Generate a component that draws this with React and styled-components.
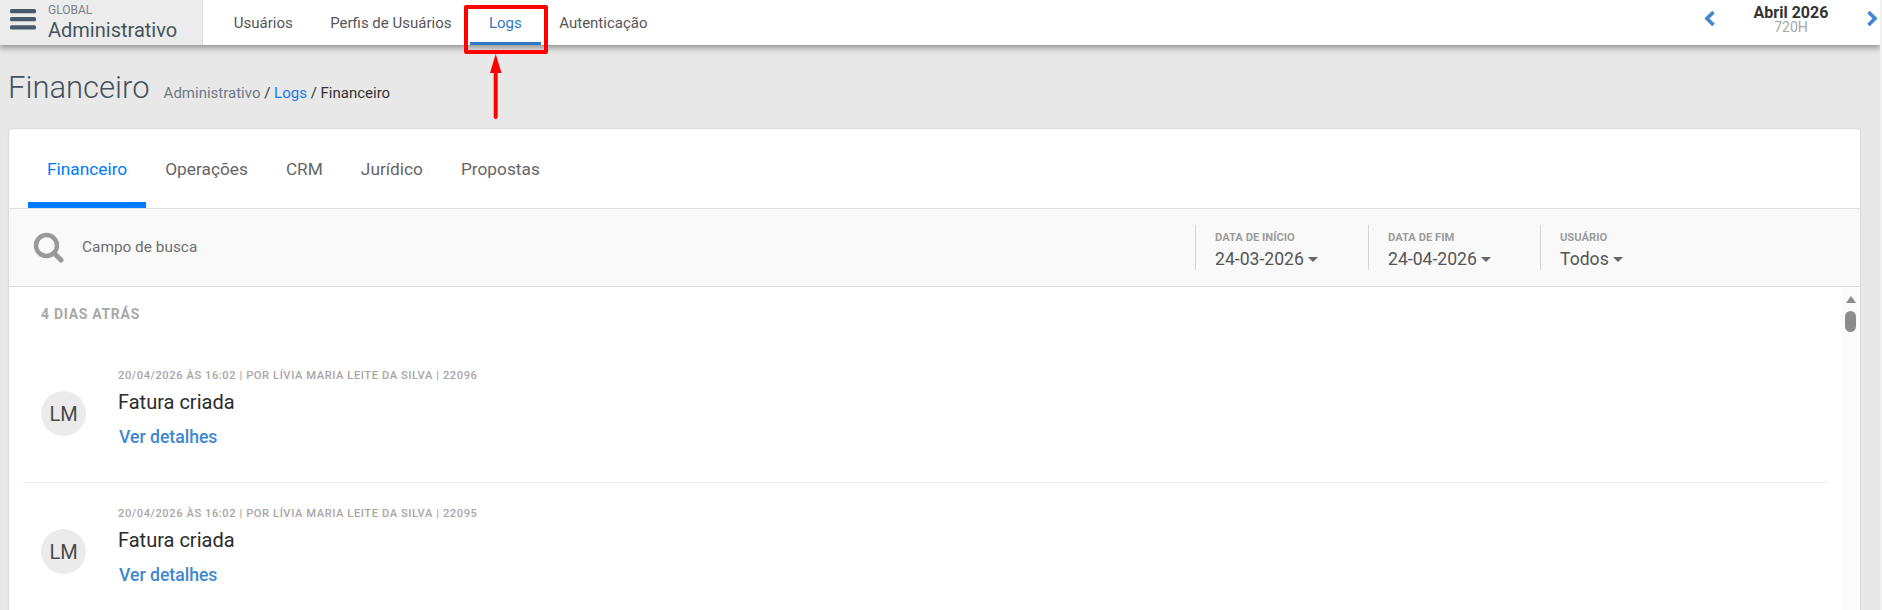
import React from 'react';
import styled, { createGlobalStyle } from 'styled-components';

const GlobalStyle = createGlobalStyle`
	html, body {
		margin: 0;
		padding: 0;
		height: 610px;
		overflow: hidden;
		background: #f1f1f1;
		font-family: Roboto, "Liberation Sans", sans-serif;
	}
	* {
		box-sizing: border-box;
	}
`;

const Page = styled.div`
	position: relative;
	width: 1880px;
	height: 610px;
	overflow: hidden;
	background: #e8e8e8;
`;

const Header = styled.header`
	position: relative;
	z-index: 2;
	display: flex;
	height: 45px;
	background: #fff;
	box-shadow: 0 1px 7px 1px rgba(0, 0, 0, 0.45);
`;

const Brand = styled.div`
	display: flex;
	width: 203px;
	padding-left: 9px;
	background: #ececec;
	border-right: 1px solid #e0e0e0;
`;

const MenuIcon = styled.svg`
	width: 28px;
	height: 21px;
	margin-top: 9px;
	margin-right: 11px;
	flex: none;
`;

const BrandText = styled.div`
	display: flex;
	flex-direction: column;
`;

const BrandSmall = styled.span`
	margin-top: 3px;
	font-size: 12px;
	line-height: 14px;
	color: #7a8288;
`;

const BrandBig = styled.span`
	margin-top: 1px;
	font-size: 20px;
	line-height: 24px;
	color: #46535e;
`;

const Nav = styled.nav`
	display: flex;
	padding-left: 12px;
`;

const NavItem = styled.a`
	display: flex;
	align-items: center;
	height: 45px;
	padding: 4px 18.75px 0;
	font-size: 15px;
	color: ${({ $active }) => ($active ? '#3178c6' : '#555')};
	border-bottom: 3px solid ${({ $active }) => ($active ? '#3178c6' : 'transparent')};
`;

const Period = styled.div`
	display: flex;
	align-items: center;
	height: 45px;
	margin-left: auto;
	margin-right: 2px;
	padding-bottom: 9px;
`;

const PeriodText = styled.div`
	display: flex;
	flex-direction: column;
	align-items: center;
	width: 150px;
	margin-top: 3px;
`;

const PeriodMonth = styled.span`
	font-size: 16px;
	font-weight: 700;
	line-height: 16px;
	color: #333;
`;

const PeriodHours = styled.span`
	font-size: 14px;
	line-height: 13px;
	color: #a8a8a8;
`;

const Chevron = styled.svg`
	width: 12px;
	height: 17px;
	flex: none;
`;

const TitleRow = styled.div`
	display: flex;
	align-items: baseline;
	height: 84px;
	padding: 23px 0 0 8px;
`;

const Title = styled.h1`
	margin: 0 14px 0 0;
	font-size: 31px;
	font-weight: 300;
	line-height: 40px;
	color: #46535e;
`;

const Crumbs = styled.div`
	font-size: 15px;
	color: #333;
`;

const CrumbMuted = styled.span`
	color: #6c7b86;
`;

const CrumbLink = styled.a`
	color: #1a7bea;
`;

const Card = styled.section`
	margin: 0 20px 0 9px;
	height: 600px;
	background: #fff;
	border-radius: 3px;
	box-shadow: 0 0 2px rgba(0, 0, 0, 0.2);
`;

const Tabs = styled.div`
	display: flex;
	height: 80px;
	padding-left: 19px;
	border-bottom: 1px solid #e0e0e0;
`;

const Tab = styled.a`
	display: flex;
	align-items: center;
	height: 79px;
	padding: 6px 19px 0;
	font-size: 17.3px;
	color: ${({ $active }) => ($active ? '#007bff' : '#666')};
	border-bottom: 6px solid ${({ $active }) => ($active ? '#007bff' : 'transparent')};
`;

const FilterBar = styled.div`
	display: flex;
	align-items: center;
	height: 78px;
	padding-left: 24px;
	background: #f9f9f9;
	border-bottom: 1px solid #dedede;
`;

const SearchIcon = styled.svg`
	width: 31px;
	height: 31px;
	flex: none;
`;

const SearchLabel = styled.span`
	margin: 0 0 2px 18px;
	font-size: 15.4px;
	color: #6d6d6d;
`;

const Filters = styled.div`
	display: flex;
	margin-left: auto;
	margin-right: 180px;
`;

const Filter = styled.div`
	display: flex;
	flex-direction: column;
	width: ${({ $w }) => $w}px;
	height: 45px;
	padding-left: 19px;
	border-left: 1px solid #d4d4d4;
`;

const FilterLabel = styled.span`
	margin-top: 6px;
	font-size: 11.2px;
	font-weight: 700;
	line-height: 14px;
	color: #9d9d9d;
`;

const FilterValue = styled.span`
	display: flex;
	align-items: center;
	margin-top: 4px;
	font-size: 17.6px;
	line-height: 20px;
	color: #555;
`;

const Caret = styled.i`
	width: 0;
	height: 0;
	margin-left: 4px;
	border-left: 5px solid transparent;
	border-right: 5px solid transparent;
	border-top: 5px solid #666;
`;

const ListArea = styled.div`
	display: flex;
	height: 400px;
`;

const List = styled.div`
	flex: 1;
	padding: 0 14px;
`;

const DayHeading = styled.div`
	height: 49px;
	padding: 19px 0 0 18px;
	font-size: 14px;
	font-weight: 700;
	line-height: 16px;
	letter-spacing: 0.7px;
	color: #a9a9a9;
`;

const LogRow = styled.article`
	display: flex;
	align-items: flex-start;
	height: 138px;
	padding: ${({ $first }) => ($first ? '33px' : '24px')} 0 0 18px;
	border-bottom: 1px solid #ececec;
	&:first-of-type {
		height: 147px;
	}
`;

const Avatar = styled.div`
	display: flex;
	align-items: center;
	justify-content: center;
	width: 45px;
	height: 45px;
	margin: 22px 32px 0 0;
	flex: none;
	border-radius: 50%;
	background: #ebebeb;
	font-size: 20px;
	color: #4a4a4a;
`;

const LogBody = styled.div`
	display: flex;
	flex-direction: column;
	align-items: flex-start;
`;

const LogMeta = styled.span`
	font-size: 11.2px;
	font-weight: 500;
	line-height: 14px;
	letter-spacing: 0.55px;
	color: #aaa5a5;
`;

const LogTitle = styled.span`
	margin-top: 6px;
	font-size: 20px;
	line-height: 26px;
	color: #2b2b2b;
`;

const LogLink = styled.a`
	margin: 11px 0 0 1px;
	font-size: 17.6px;
	font-weight: 500;
	line-height: 22px;
	color: #3f87cf;
`;

const ScrollTrack = styled.div`
	display: flex;
	flex-direction: column;
	align-items: center;
	width: 19px;
	margin-left: -1px;
	padding-top: 9px;
	background: #fbfbfb;
`;

const ScrollArrow = styled.i`
	width: 0;
	height: 0;
	border-left: 5px solid transparent;
	border-right: 5px solid transparent;
	border-bottom: 7px solid #8c8c8c;
`;

const ScrollThumb = styled.i`
	width: 11px;
	height: 21px;
	margin-top: 8px;
	border-radius: 6px;
	background: #8c8c8c;
`;

const Highlight = styled.div`
	position: absolute;
	z-index: 3;
	left: 464px;
	top: 5px;
	width: 84px;
	height: 49px;
	border: 4px solid #f00;
	border-radius: 2px;
`;

const Arrow = styled.svg`
	position: absolute;
	z-index: 3;
	left: 490px;
	top: 54px;
	width: 12px;
	height: 66px;
`;

const tabs = ['Financeiro', 'Operações', 'CRM', 'Jurídico', 'Propostas'];
const navItems = ['Usuários', 'Perfis de Usuários', 'Logs', 'Autenticação'];
const filters = [
	{ label: 'DATA DE INÍCIO', value: '24-03-2026', w: 173 },
	{ label: 'DATA DE FIM', value: '24-04-2026', w: 172 },
	{ label: 'USUÁRIO', value: 'Todos', w: 140 },
];
const logs = ['22096', '22095'];

const App = () => (
	<Page>
		<GlobalStyle />
		<Header>
			<Brand>
				<MenuIcon viewBox="0 0 28 21">
					<rect x="1" y="0" width="26" height="4.3" rx="1.5" fill="#47596a" />
					<rect x="1" y="8" width="26" height="4.3" rx="1.5" fill="#47596a" />
					<rect x="1" y="16.3" width="26" height="4.3" rx="1.5" fill="#47596a" />
				</MenuIcon>
				<BrandText>
					<BrandSmall>GLOBAL</BrandSmall>
					<BrandBig>Administrativo</BrandBig>
				</BrandText>
			</Brand>
			<Nav>
				{navItems.map((item) => (
					<NavItem key={item} $active={item === 'Logs'}>
						{item}
					</NavItem>
				))}
			</Nav>
			<Period>
				<Chevron viewBox="0 0 12 17">
					<path d="M9.5 2 3 8.5 9.5 15" fill="none" stroke="#3f87cf" strokeWidth="3.6" />
				</Chevron>
				<PeriodText>
					<PeriodMonth>Abril 2026</PeriodMonth>
					<PeriodHours>720H</PeriodHours>
				</PeriodText>
				<Chevron viewBox="0 0 12 17">
					<path d="M2.5 2 9 8.5 2.5 15" fill="none" stroke="#3f87cf" strokeWidth="3.6" />
				</Chevron>
			</Period>
		</Header>
		<Highlight />
		<Arrow viewBox="0 0 12 66">
			<path d="M5.7 0 11.5 19H0Z" fill="#f00" />
			<path d="M5.7 18V63" stroke="#f00" strokeWidth="4" strokeLinecap="round" />
		</Arrow>
		<TitleRow>
			<Title>Financeiro</Title>
			<Crumbs>
				<CrumbMuted>Administrativo</CrumbMuted> / <CrumbLink>Logs</CrumbLink> / Financeiro
			</Crumbs>
		</TitleRow>
		<Card>
			<Tabs>
				{tabs.map((tab) => (
					<Tab key={tab} $active={tab === 'Financeiro'}>
						{tab}
					</Tab>
				))}
			</Tabs>
			<FilterBar>
				<SearchIcon viewBox="0 0 31 31">
					<circle cx="13.5" cy="13.5" r="10.5" fill="none" stroke="#999" strokeWidth="4.5" />
					<path d="M21 21 28 28" stroke="#999" strokeWidth="5" strokeLinecap="round" />
				</SearchIcon>
				<SearchLabel>Campo de busca</SearchLabel>
				<Filters>
					{filters.map((filter) => (
						<Filter key={filter.label} $w={filter.w}>
							<FilterLabel>{filter.label}</FilterLabel>
							<FilterValue>
								{filter.value}
								<Caret />
							</FilterValue>
						</Filter>
					))}
				</Filters>
			</FilterBar>
			<ListArea>
				<List>
					<DayHeading>4 DIAS ATRÁS</DayHeading>
					{logs.map((id, i) => (
						<LogRow key={id} $first={i === 0}>
							<Avatar>LM</Avatar>
							<LogBody>
								<LogMeta>20/04/2026 ÀS 16:02 | POR LÍVIA MARIA LEITE DA SILVA | {id}</LogMeta>
								<LogTitle>Fatura criada</LogTitle>
								<LogLink>Ver detalhes</LogLink>
							</LogBody>
						</LogRow>
					))}
				</List>
				<ScrollTrack>
					<ScrollArrow />
					<ScrollThumb />
				</ScrollTrack>
			</ListArea>
		</Card>
	</Page>
);

export default App;
